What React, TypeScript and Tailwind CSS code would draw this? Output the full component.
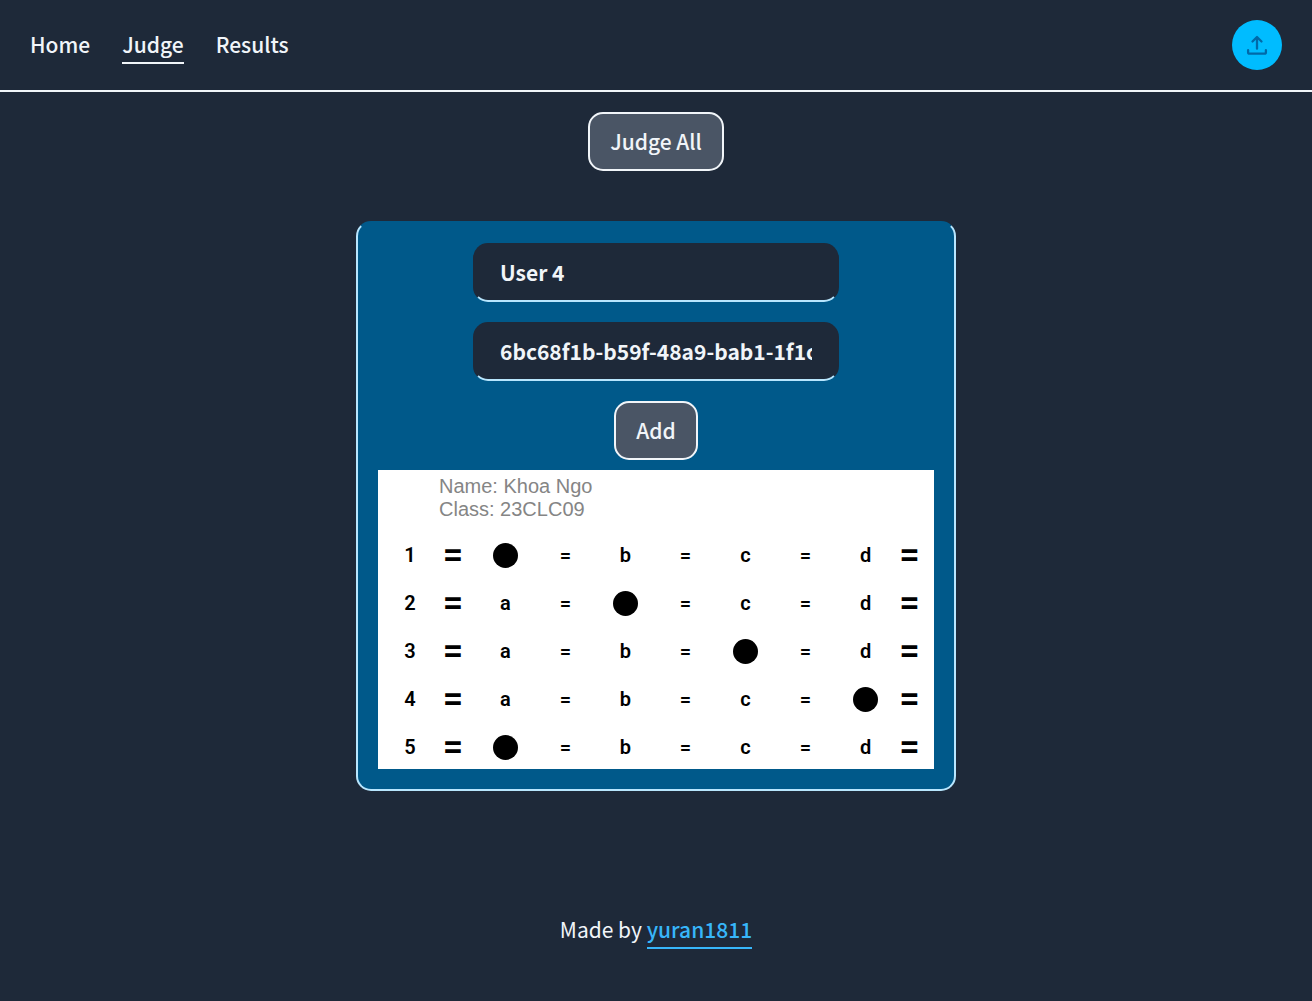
import { useState } from "react";

const options = ["a", "b", "c", "d"];
const answers = ["a", "b", "c", "d", "a"];

const fieldClass =
  "block w-full rounded-[15px] border-2 border-transparent border-b-[#b8e6fe] bg-[#1e2939] px-[25px] py-[10px] text-[21px] leading-[35px] font-bold text-slate-100 outline-none";
const buttonClass =
  "rounded-[15px] border-2 border-slate-100 bg-[#4a5565] px-5 py-[10px] text-[21px] leading-[35px] font-medium text-slate-100";

function UploadIcon() {
  return (
    <svg viewBox="0 0 24 24" className="size-6" fill="none" stroke="currentColor" strokeLinecap="round" strokeLinejoin="round" aria-hidden="true">
      <path strokeWidth="2.3" d="M12 15.700V4.200M7.500 8.500 12 4l4.500 4.500" />
      <path strokeWidth="2.3" d="M3.100 17.200v2A1.500 1.500 0 0 0 4.600 20.700h14.800a1.500 1.500 0 0 0 1.500-1.500v-2" />
    </svg>
  );
}

function AnswerSheet() {
  return (
    <section className="w-full overflow-hidden bg-white font-[Roboto,sans-serif] text-black" aria-label="Answer sheet">
      <p className="pt-[5px] pl-[61px] font-['Liberation_Sans',sans-serif] text-xl leading-[23px] text-[#858585]">
        Name: Khoa Ngo
        <br />
        Class: 23CLC09
      </p>
      <table className="mt-[10px] mb-[-2px] w-full table-fixed border-collapse text-center text-xl leading-6 font-semibold">
        <colgroup>
          <col className="w-[9.5%]" />
          <col className="w-[8%]" />
          <col span={7} className="w-[10.8%]" />
          <col className="w-[5%]" />
          <col />
        </colgroup>
        <tbody>
          {answers.map((answer, row) => (
            <tr key={row} className="h-12">
              <th scope="row" className="pl-[11px] font-semibold">{row + 1}</th>
              <td className="text-4xl leading-6">=</td>
              {options.map((option) => [
                <td key={option}>
                  {answer === option ? (
                    <span role="img" aria-label={option} className="mx-auto block size-[25px] rounded-full bg-black" />
                  ) : (
                    option
                  )}
                </td>,
                <td key={option + "-mark"} className={option === "d" ? "text-4xl leading-6" : "text-xl leading-6"}>
                  =
                </td>,
              ])}
              <td />
            </tr>
          ))}
        </tbody>
      </table>
    </section>
  );
}

export default function App() {
  const [name, setName] = useState("User 4");
  const [id, setId] = useState("6bc68f1b-b59f-48a9-bab1-1f1c7d2e90ab");
  return (
    <div className="min-h-screen bg-[#1e2939] font-['Noto_Sans_CJK_SC',sans-serif] text-[21px] leading-[35px] text-slate-100">
      <header className="flex items-center justify-between border-b-2 border-slate-100 px-[30px] py-5">
        <nav className="flex gap-8 font-medium">
          <a href="#home" className="border-b-2 border-transparent">Home</a>
          <a href="#judge" className="border-b-2 border-slate-100">Judge</a>
          <a href="#results" className="border-b-2 border-transparent">Results</a>
        </nav>
        <button type="button" aria-label="Upload" className="flex size-[50px] items-center justify-center rounded-full bg-[#00bcff] text-[#0069a8]">
          <UploadIcon />
        </button>
      </header>
      <main className="flex flex-col items-center gap-[50px] px-5 pt-5">
        <button type="button" className={buttonClass}>Judge All</button>
        <form onSubmit={(e) => e.preventDefault()} className="flex w-full max-w-[600px] flex-col items-center rounded-[15px] border-2 border-[#b8e6fe] border-t-transparent bg-[#00598a] p-5">
          <div className="flex w-full max-w-[366px] flex-col gap-5">
            <input aria-label="Name" className={fieldClass} value={name} onChange={(e) => setName(e.target.value)} />
            <input aria-label="ID" className={fieldClass} value={id} onChange={(e) => setId(e.target.value)} />
          </div>
          <button type="submit" className={"mt-5 mb-[10px] " + buttonClass}>Add</button>
          <AnswerSheet />
        </form>
      </main>
      <footer className="pt-[121px] pb-12 text-center">
        Made by{" "}
        <a href="#author" className="inline-block border-b-2 border-[#37b6fa] font-medium text-[#37b6fa]">yuran1811</a>
      </footer>
    </div>
  );
}
